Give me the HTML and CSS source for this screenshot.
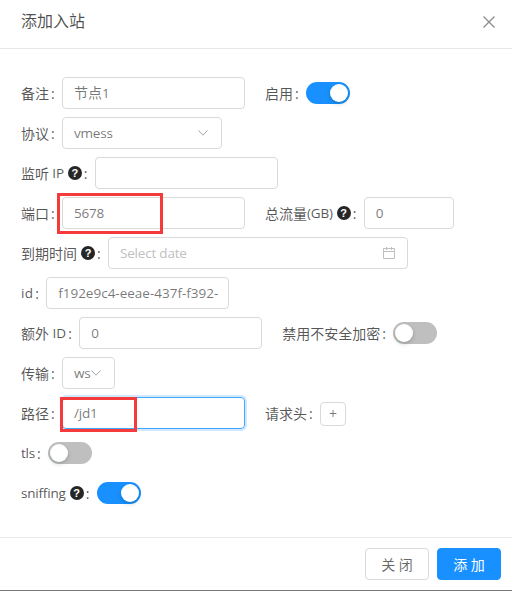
FILE: index.html
```html
<!DOCTYPE html>
<html lang="zh">
<head>
<meta charset="utf-8">
<title>添加入站</title>
<link rel="stylesheet" href="styles.css">
</head>
<body>
<div class="modal">
  <header class="modal-header">
    <span class="modal-title">添加入站</span>
    <svg class="close" viewBox="0 0 12 12" width="12" height="12"><path d="M.5.5l11 11M11.5.5l-11 11"/></svg>
  </header>
  <main class="modal-body">
    <div class="row">
      <label class="label">备注<span class="colon">:</span></label>
      <div class="input w183"><span class="cjk">节点</span>1</div>
      <label class="label second">启用<span class="colon">:</span></label>
      <span class="switch on"><i></i></span>
    </div>
    <div class="row">
      <label class="label">协议<span class="colon">:</span></label>
      <div class="input w160 select">vmess<svg class="chev" viewBox="0 0 10 6" width="10" height="6"><path d="M.5.5l4.500 4.700L9.500.5"/></svg></div>
    </div>
    <div class="row">
      <label class="label">监听<span class="lat">&nbsp;IP</span><span class="help">?</span><span class="colon">:</span></label>
      <div class="input w183"></div>
    </div>
    <div class="row">
      <label class="label">端口<span class="colon">:</span></label>
      <div class="input w183">5678<span class="redbox box-port"></span></div>
      <label class="label second">总流量<span class="lat">(GB)</span><span class="help">?</span><span class="colon">:</span></label>
      <div class="input w90">0</div>
    </div>
    <div class="row">
      <label class="label">到期时间<span class="help">?</span><span class="colon">:</span></label>
      <div class="input w300 placeholder">Select date<svg class="calendar" viewBox="0 0 14 14" width="14" height="14"><path d="M1.500 2.500h11v10h-11zM1.500 5.500h11M4.500 1v3M9.500 1v3"/></svg></div>
    </div>
    <div class="row">
      <label class="label"><span class="lat wide">id</span><span class="colon">:</span></label>
      <div class="input w183 clip">f192e9c4-eeae-437f-f392-</div>
    </div>
    <div class="row">
      <label class="label">额外<span class="lat mid">&nbsp;ID</span><span class="colon">:</span></label>
      <div class="input w183">0</div>
      <label class="label second">禁用不安全加密<span class="colon">:</span></label>
      <span class="switch"><i></i></span>
    </div>
    <div class="row">
      <label class="label">传输<span class="colon">:</span></label>
      <div class="input w53 select">ws<svg class="chev" viewBox="0 0 10 6" width="10" height="6"><path d="M.5.5l4.500 4.700L9.500.5"/></svg></div>
    </div>
    <div class="row">
      <label class="label">路径<span class="colon">:</span></label>
      <div class="input w183 focused">/jd1<span class="redbox box-path"></span></div>
      <label class="label second">请求头<span class="colon">:</span></label>
      <button class="plus">+</button>
    </div>
    <div class="row">
      <label class="label"><span class="lat">tls</span><span class="colon">:</span></label>
      <span class="switch"><i></i></span>
    </div>
    <div class="row">
      <label class="label"><span class="lat">sniffing</span><span class="help">?</span><span class="colon">:</span></label>
      <span class="switch on"><i></i></span>
    </div>
  </main>
  <footer class="modal-footer">
    <button class="btn">关 闭</button>
    <button class="btn primary">添 加</button>
  </footer>
</div>
</body>
</html>
```

FILE: styles.css
```css
* { box-sizing: border-box; }
html, body { margin: 0; height: 100%; }
body {
  background: #fff;
  color: rgba(0, 0, 0, .65);
  font-family: "Open Sans", "Noto Sans CJK SC", sans-serif;
  font-size: 14px;
  overflow: hidden;
}
.modal { height: 591px; display: flex; flex-direction: column; border-bottom: 1px solid #777; }
.modal-header {
  height: 49px;
  padding: 0 17px 4px 21px;
  border-bottom: 1px solid #e8e8e8;
  display: flex;
  align-items: center;
  justify-content: space-between;
  flex: none;
}
.modal-title { font-size: 16px; line-height: 22px; margin-top: -2px; color: rgba(0, 0, 0, .7); }
.close { fill: none; stroke: #8c8c8c; stroke-width: 1.300; }
.modal-body { flex: 1; padding: 28px 21px 0; }
.row { display: flex; align-items: center; height: 32px; margin-bottom: 8px; }
.label { display: flex; align-items: center; color: rgba(0, 0, 0, .68); white-space: nowrap; }
.label.second { margin-left: 20px; }
.lat { font-size: 13.500px; letter-spacing: -.2px; }
.lat.wide { letter-spacing: .25px; }
.lat.mid { letter-spacing: .03px; }
.colon { width: 13px; padding-left: 2px; flex: none; }
.help {
  width: 14px; height: 14px; margin-left: 4px; flex: none;
  background: #262626; color: #fff; border-radius: 50%;
  font-size: 11px; font-weight: 700; line-height: 14px; text-align: center;
  font-family: "Liberation Sans", sans-serif;
}
.input {
  position: relative;
  height: 32px;
  padding: 0 11px;
  border: 1px solid #d9d9d9;
  border-radius: 4px;
  color: rgba(0, 0, 0, .55);
  font-size: 13.500px;
  letter-spacing: -.2px;
  line-height: 30px;
  white-space: nowrap;
  flex: none;
}
.cjk { font-size: 14px; letter-spacing: 0; }
.w183 { width: 183px; }
.w160 { width: 160px; }
.w90 { width: 90px; }
.w300 { width: 300px; }
.w53 { width: 53px; }
.clip { overflow: hidden; letter-spacing: 0; }
.placeholder { color: #bfbfbf; }
.select { display: flex; align-items: center; justify-content: space-between; padding-right: 13px; }
.chev { fill: none; stroke: #a6a6a6; stroke-width: 1; flex: none; }
.calendar { position: absolute; right: 11px; top: 8px; fill: none; stroke: #bfbfbf; stroke-width: 1; }
.focused { border-color: #40a9ff; box-shadow: 0 0 0 2px rgba(24, 144, 255, .2); }
.redbox { position: absolute; border: 3px solid #f43a3a; }
.box-port { left: -6px; top: -5px; width: 106px; height: 41px; }
.box-path { left: -3px; top: -1px; width: 77px; height: 35px; }
.switch {
  position: relative; width: 44px; height: 22px; border-radius: 11px;
  background: #bfbfbf; flex: none; display: block;
}
.switch i {
  position: absolute; left: 2px; top: 2px; width: 18px; height: 18px;
  border-radius: 50%; background: #fff; box-shadow: 0 2px 4px rgba(0, 35, 11, .2);
}
.switch.on { background: #1890ff; }
.switch.on i { left: 24px; }
.plus {
  width: 26px; height: 24px; padding: 0; margin-top: 2px; background: #fff;
  border: 1px solid #d9d9d9; border-radius: 4px; color: rgba(0, 0, 0, .55);
  font: 14px/22px "Open Sans", sans-serif;
}
.modal-footer {
  height: 53px; flex: none;
  border-top: 1px solid #e8e8e8;
  padding: 10px 11px 0 0;
  display: flex; justify-content: flex-end; gap: 8px;
}
.btn {
  width: 64px; height: 32px; padding: 0;
  background: #fff; border: 1px solid #d9d9d9; border-radius: 4px;
  color: rgba(0, 0, 0, .6);
  font: 14px "Open Sans", "Noto Sans CJK SC", sans-serif;
}
.btn.primary { background: #1890ff; border-color: #1890ff; color: #fff; }
```
